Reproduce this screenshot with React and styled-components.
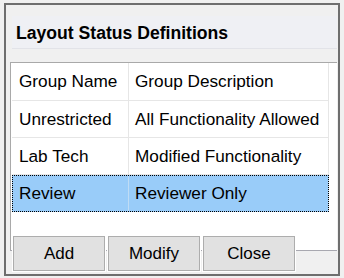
import React from "react";
import styled, { createGlobalStyle } from "styled-components";

const Global = createGlobalStyle`
  html, body { margin: 0; padding: 0; background: #f0f0f0; }
  body { font-family: "Liberation Sans", Arial, sans-serif; }
`;

const Window = styled.div`
  box-sizing: border-box;
  margin: 3px 0 0 4px;
  width: 336px;
  height: 273px;
  border: 2px solid #6e6e6e;
  background: #f0f0f0;
  display: flex;
  flex-direction: column;
  padding: 11px 1px 0 4px;
`;

const TitleBand = styled.div`
  box-sizing: border-box;
  height: 33px;
  margin-left: 2px;
  background: #eff0f4;
  border-bottom: 1px solid #e2e3e8;
  display: flex;
  align-items: center;
  padding-left: 4px;
  padding-top: 2px;
  font-size: 17.6px;
  font-weight: bold;
  color: #000;
`;

const ListBox = styled.div`
  box-sizing: border-box;
  margin-top: 13px;
  width: 327px;
  height: 189px;
  background: #fff;
  border: 1px solid #a9a9a9;
  border-right: none;
  border-bottom: 1px solid #a8a8b0;
  padding: 0 0 0 1px;
`;

const Table = styled.div`
  display: grid;
  grid-template-columns: 117px 200px;
  width: 317px;
`;

const Cell = styled.div`
  box-sizing: border-box;
  height: ${(p) => (p.$first ? 38 : 37)}px;
  display: flex;
  align-items: center;
  padding-left: ${(p) => (p.$col === 0 ? 7 : 6)}px;
  font-size: 17.2px;
  color: #000;
  white-space: nowrap;
  border-bottom: 1px solid ${(p) => (p.$selected ? "transparent" : "#e6e6e6")};
  border-right: 1px solid ${(p) => (p.$selected ? "#bfdcf5" : "#e6e6e6")};
  background: ${(p) => (p.$selected ? "#99ccf9" : "#fff")};
`;

const SelectedRow = styled.div`
  grid-column: 1 / span 2;
  display: grid;
  grid-template-columns: 117px 200px;
  outline: 1px dotted #000;
  outline-offset: -1px;
`;

const ButtonRow = styled.div`
  display: flex;
  gap: 3px;
  margin: -15px 0 0 3px;
`;

const Button = styled.button`
  box-sizing: border-box;
  width: 92px;
  height: 35px;
  background: #e1e1e1;
  border: 1px solid #adadad;
  outline: 1px solid #fff;
  font-family: "Liberation Sans", Arial, sans-serif;
  font-size: 17px;
  color: #000;
  padding: 0;
  margin: 0;
`;

const rows = [
  ["Unrestricted", "All Functionality Allowed"],
  ["Lab Tech", "Modified Functionality"],
];

export default function App() {
  return (
    <>
      <Global />
      <Window>
        <TitleBand>Layout Status Definitions</TitleBand>
        <ListBox>
          <Table>
            <Cell $col={0} $first>Group Name</Cell>
            <Cell $col={1} $first>Group Description</Cell>
            {rows.map(([a, b]) => (
              <React.Fragment key={a}>
                <Cell $col={0}>{a}</Cell>
                <Cell $col={1}>{b}</Cell>
              </React.Fragment>
            ))}
            <SelectedRow>
              <Cell $col={0} $selected>Review</Cell>
              <Cell $col={1} $selected>Reviewer Only</Cell>
            </SelectedRow>
          </Table>
        </ListBox>
        <ButtonRow>
          <Button>Add</Button>
          <Button>Modify</Button>
          <Button>Close</Button>
        </ButtonRow>
      </Window>
    </>
  );
}
